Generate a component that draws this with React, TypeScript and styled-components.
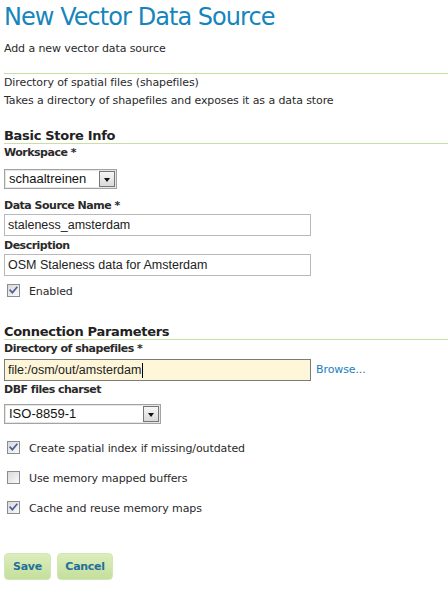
import React from "react";
import styled, { createGlobalStyle } from "styled-components";

const GlobalStyle = createGlobalStyle`
  html, body { margin: 0; padding: 0; background: #ffffff; }
  body {
    font-family: "DejaVu Sans", Verdana, sans-serif;
    font-size: 11px;
    letter-spacing: -0.1px;
    color: #2a2a2a;
  }
`;

const Page = styled.div`
  width: 448px;
  height: 597px;
  overflow: hidden;
  padding-left: 4px;
  box-sizing: border-box;
`;

const Title = styled.h1`
  margin: 0;
  padding-top: 2px;
  font-size: 24px;
  line-height: 30px;
  font-weight: normal;
  letter-spacing: -0.95px;
  color: #1585be;
`;

const Subtitle = styled.p`
  margin: 8px 0 0;
  line-height: 18px;
`;

const Rule = styled.div`
  margin-top: 15px;
  height: 1px;
  background: #c8dfa4;
`;

const Text = styled.p`
  margin: 0;
  line-height: 18px;
`;

const SectionHeading = styled.h2<{ $mt: number }>`
  margin: ${(p) => p.$mt}px 0 0;
  font-size: 13px;
  line-height: 15px;
  font-weight: bold;
  letter-spacing: -0.3px;
  color: #222;
  border-bottom: 1px solid #c8dfa4;
`;

const FieldLabel = styled.label<{ $mt: number }>`
  display: block;
  margin-top: ${(p) => p.$mt}px;
  font-weight: bold;
  line-height: 14px;
  letter-spacing: -0.5px;
  color: #2a2a2a;
`;

const SelectBox = styled.div<{ $mt: number; $w: number }>`
  margin-top: ${(p) => p.$mt}px;
  width: ${(p) => p.$w}px;
  height: 20px;
  box-sizing: border-box;
  display: flex;
  align-items: stretch;
  border: 1px solid #a3a3a3;
  box-shadow: inset 0 0 0 1px #e6e6e6;
  background: #fff;
  padding: 1px;
`;

const SelectValue = styled.span`
  flex: 1;
  padding-left: 3px;
  font-family: "Liberation Sans", Arial, sans-serif;
  font-size: 13px;
  letter-spacing: 0;
  line-height: 16px;
  color: #111;
`;

const SelectArrow = styled.span`
  width: 16px;
  box-sizing: border-box;
  border: 1px solid #767676;
  background: linear-gradient(#f6f6f6, #d9d9d9);
  display: flex;
  align-items: center;
  justify-content: center;
  &::after {
    content: "";
    border-left: 3.5px solid transparent;
    border-right: 3.5px solid transparent;
    border-top: 4px solid #111;
    margin-top: 1px;
  }
`;

const TextInput = styled.div<{ $mt: number; $active?: boolean }>`
  margin-top: ${(p) => p.$mt}px;
  width: 307px;
  height: 22px;
  box-sizing: border-box;
  display: flex;
  align-items: center;
  padding-left: 3px;
  border: 1px solid ${(p) => (p.$active ? "#7b7b7b" : "#b9b9b9")};
  background: ${(p) => (p.$active ? "#fdf6d9" : "#ffffff")};
  font-family: "Liberation Sans", Arial, sans-serif;
  font-size: 12.5px;
  letter-spacing: 0;
  color: #222;
`;

const Caret = styled.span`
  display: inline-block;
  width: 1px;
  height: 15px;
  background: #000;
  margin-left: 1px;
`;

const InputRow = styled.div`
  display: flex;
  align-items: center;
  gap: 5px;
  margin-top: 3px;
  & > ${TextInput} {
    margin-top: 0;
  }
`;

const Link = styled.a`
  color: #1a7fbd;
  text-decoration: none;
  line-height: 18px;
  cursor: pointer;
`;

const CheckList = styled.div<{ $mt: number }>`
  margin-top: ${(p) => p.$mt}px;
  display: flex;
  flex-direction: column;
  gap: 12px;
`;

const CheckRow = styled.label`
  display: flex;
  align-items: flex-start;
  gap: 9px;
  padding-left: 3px;
  line-height: 18px;
`;

const CheckBoxIcon = styled.svg`
  flex: none;
  margin-top: 1px;
`;

const Check = ({ checked }: { checked: boolean }) => (
  <CheckBoxIcon width="13" height="13" viewBox="0 0 13 13">
    <defs>
      <linearGradient id="cbg" x1="0" y1="0" x2="1" y2="1">
        <stop offset="0" stopColor="#d8d8d8" />
        <stop offset="1" stopColor="#fbfbfb" />
      </linearGradient>
    </defs>
    <rect x="0.5" y="0.5" width="12" height="12" fill="url(#cbg)" stroke="#8c8c8c" />
    {checked && (
      <path
        d="M3.2 6.2 L5.4 8.6 L9.8 3.4"
        fill="none"
        stroke="#4f5f98"
        strokeWidth="1.7"
        strokeLinecap="square"
      />
    )}
  </CheckBoxIcon>
);

const ButtonBar = styled.div`
  margin-top: 35px;
  display: flex;
  gap: 6px;
`;

const Button = styled.button<{ $w: number }>`
  width: ${(p) => p.$w}px;
  height: 27px;
  box-sizing: border-box;
  border: 1px solid #d3e7b6;
  border-radius: 4px;
  background: linear-gradient(#dbedbd, #c4df9c);
  font-family: "DejaVu Sans", Verdana, sans-serif;
  font-size: 11px;
  font-weight: bold;
  letter-spacing: -0.3px;
  color: #246f99;
  padding: 0;
  line-height: 14px;
  cursor: pointer;
`;

export default function App() {
  return (
    <>
      <GlobalStyle />
      <Page>
        <Title>New Vector Data Source</Title>
        <Subtitle>Add a new vector data source</Subtitle>
        <Rule />
        <Text>Directory of spatial files (shapefiles)</Text>
        <Text>Takes a directory of shapefiles and exposes it as a data store</Text>

        <SectionHeading $mt={18}>Basic Store Info</SectionHeading>
        <FieldLabel $mt={2}>Workspace *</FieldLabel>
        <SelectBox $mt={9} $w={113}>
          <SelectValue>schaaltreinen</SelectValue>
          <SelectArrow />
        </SelectBox>
        <FieldLabel $mt={10}>Data Source Name *</FieldLabel>
        <TextInput $mt={1}>staleness_amsterdam</TextInput>
        <FieldLabel $mt={3}>Description</FieldLabel>
        <TextInput $mt={1}>OSM Staleness data for Amsterdam</TextInput>
        <CheckList $mt={7}>
          <CheckRow>
            <Check checked />
            Enabled
          </CheckRow>
        </CheckList>

        <SectionHeading $mt={23}>Connection Parameters</SectionHeading>
        <FieldLabel $mt={2}>Directory of shapefiles *</FieldLabel>
        <InputRow>
          <TextInput $mt={0} $active>
            file:/osm/out/amsterdam
            <Caret />
          </TextInput>
          <Link>Browse...</Link>
        </InputRow>
        <FieldLabel $mt={2}>DBF files charset</FieldLabel>
        <SelectBox $mt={7} $w={157}>
          <SelectValue>ISO-8859-1</SelectValue>
          <SelectArrow />
        </SelectBox>
        <CheckList $mt={16}>
          <CheckRow>
            <Check checked />
            Create spatial index if missing/outdated
          </CheckRow>
          <CheckRow>
            <Check checked={false} />
            Use memory mapped buffers
          </CheckRow>
          <CheckRow>
            <Check checked />
            Cache and reuse memory maps
          </CheckRow>
        </CheckList>

        <ButtonBar>
          <Button $w={47}>Save</Button>
          <Button $w={56}>Cancel</Button>
        </ButtonBar>
      </Page>
    </>
  );
}
